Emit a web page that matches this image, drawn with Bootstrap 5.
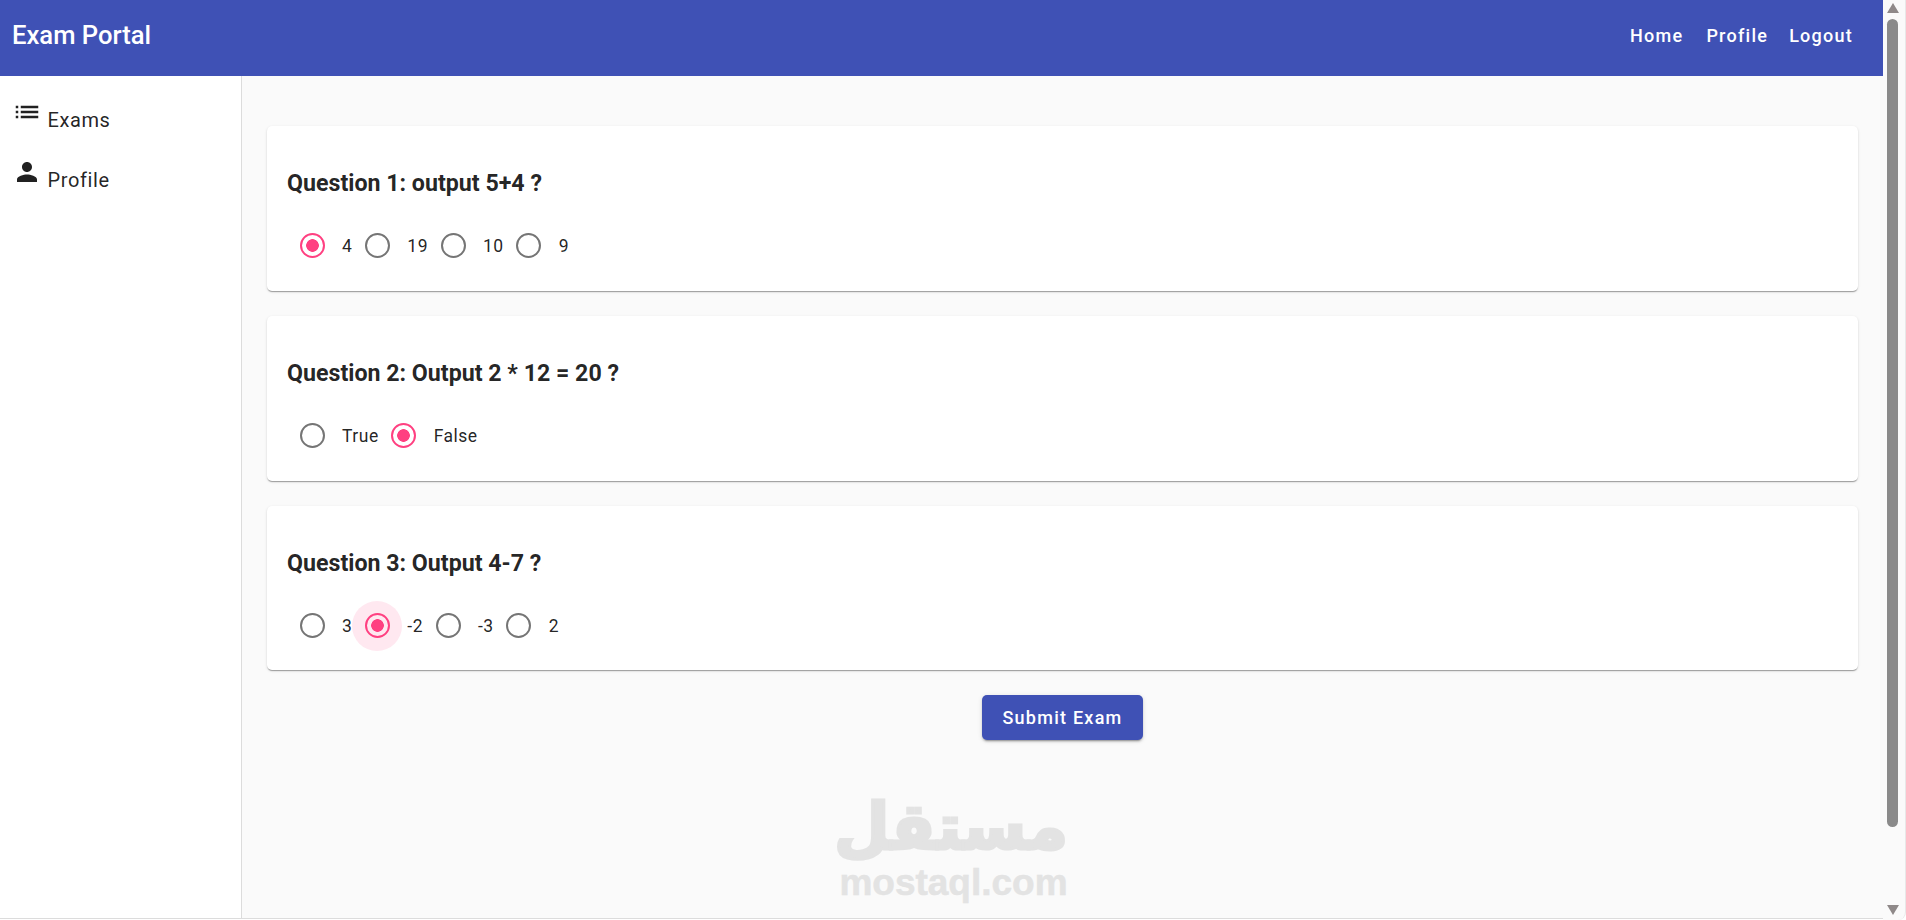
<!DOCTYPE html>
<html lang="en">
<head>
<meta charset="utf-8">
<title>Exam Portal</title>
<link href="https://cdn.jsdelivr.net/npm/bootstrap@5.3.0/dist/css/bootstrap.min.css" rel="stylesheet">
<style>
html,body{height:920px;overflow:hidden;}
body{font-family:Roboto,"Liberation Sans",sans-serif;background:#fff;color:rgba(0,0,0,.87);}
.shell{height:920px;}
.page-col{width:1883px;}
.top-bar{height:76px;background:#3f51b5;padding:0 30px 5px 12px;}
.top-bar .navbar-brand{font-size:25.6px;font-weight:500;color:#fff;padding:0 0 1px;margin:0;}
.top-links{gap:21px;}
.top-links .nav-link{color:#fff;font-size:18px;font-weight:500;letter-spacing:1.25px;padding:0;}
.top-links .nav-link.wide-gap{margin-right:2px;}
.body-row{height:843px;border-bottom:1px solid #dcdcdc;}
.side-menu{width:242px;background:#fff;border-right:1px solid #dcdcdc;padding-top:21px;}
.side-item{display:block;height:60px;padding-left:12px;font-size:20px;letter-spacing:.6px;color:rgba(0,0,0,.87);text-decoration:none;line-height:30px;}
.side-item svg{width:30px;height:30px;fill:#212121;margin-right:5.5px;vertical-align:baseline;}
.content-area{background:#fafafa;padding:50px 25px 0;}
.quiz-card{border:0;border-radius:5px;background:#fff;padding:20px;margin-bottom:25px;height:164.8px;box-shadow:0 2px 1px -1px rgba(0,0,0,.2),0 1px 1px 0 rgba(0,0,0,.14),0 1px 3px 0 rgba(0,0,0,.12);}
.quiz-title{font-size:23.2px;font-weight:700;line-height:30px;margin:22.4px 0 22.6px;color:rgba(0,0,0,.87);}
.opt{height:50px;font-size:17.5px;letter-spacing:.5px;color:rgba(0,0,0,.87);}
.opt-box{width:50px;height:50px;border-radius:50%;flex:none;}
.opt-box.is-focus{background:rgba(255,64,129,.12);}
.opt-label{padding-left:5px;line-height:50px;}
.opt input.form-check-input{width:25px;height:25px;margin:0;float:none;border:2px solid #757575;background-color:transparent;background-image:none;box-shadow:none;}
.opt input.form-check-input:checked{border-color:#ff4081;background-color:transparent;background-image:radial-gradient(circle,#ff4081 6px,transparent 6.6px);}
.submit-btn{background:#3f51b5;border:0;color:#fff;height:45px;width:161px;padding:0;border-radius:5px;font-size:18px;font-weight:500;letter-spacing:1.25px;box-shadow:0 3px 1px -2px rgba(0,0,0,.2),0 2px 2px 0 rgba(0,0,0,.14),0 1px 5px 0 rgba(0,0,0,.12);}
.submit-btn:hover{background:#3f51b5;color:#fff;}
.mark-logo{position:absolute;left:839px;top:712px;width:229px;color:#e3e3e3;text-align:center;font-weight:700;line-height:1;pointer-events:none;}
.mark-ar{font-family:"DejaVu Sans",sans-serif;font-size:64px;line-height:78px;white-space:nowrap;-webkit-text-stroke:3px #e3e3e3;}
.mark-en{font-family:"Liberation Sans",sans-serif;font-size:37px;line-height:34px;white-space:nowrap;-webkit-text-stroke:.5px #e3e3e3;}
.fake-scroll{width:23px;background:#fafafa;border-right:1px solid #e8e8e8;border-bottom-right-radius:8px;padding:3px 3px 5px 4px;}
.scroll-arrow{width:12px;height:10px;fill:#8f8989;flex:none;}
.scroll-thumb{width:11px;height:808px;background:#8a8a8a;border-radius:6px;margin:6px 0 78px;}
</style>
</head>
<body>
<div class="shell d-flex">
  <div class="page-col d-flex flex-column">
    <nav class="navbar top-bar d-flex justify-content-between align-items-center flex-nowrap">
      <a class="navbar-brand" href="#">Exam Portal</a>
      <div class="nav top-links flex-nowrap">
        <a class="nav-link wide-gap" href="#">Home</a>
        <a class="nav-link" href="#">Profile</a>
        <a class="nav-link" href="#">Logout</a>
      </div>
    </nav>
    <div class="body-row d-flex position-relative">
      <aside class="side-menu flex-shrink-0">
        <a class="side-item" href="#"><svg viewBox="0 0 24 24" aria-hidden="true"><path d="M3 13h2v-2H3v2zm0 4h2v-2H3v2zm0-8h2V7H3v2zm4 4h14v-2H7v2zm0 4h14v-2H7v2zM7 7v2h14V7H7z"/></svg><span>Exams</span></a>
        <a class="side-item" href="#"><svg viewBox="0 0 24 24" aria-hidden="true"><path d="M12 12c2.21 0 4-1.79 4-4s-1.79-4-4-4-4 1.79-4 4 1.79 4 4 4zm0 2c-2.67 0-8 1.34-8 4v2h16v-2c0-2.66-5.33-4-8-4z"/></svg><span>Profile</span></a>
      </aside>
      <main class="content-area flex-grow-1">
        <div class="card quiz-card">
          <h3 class="quiz-title">Question 1: output 5+4 ?</h3>
          <div class="d-flex opt">
            <label class="d-flex"><span class="opt-box d-flex align-items-center justify-content-center"><input class="form-check-input" type="radio" name="q1" checked></span><span class="opt-label">4</span></label>
            <label class="d-flex"><span class="opt-box d-flex align-items-center justify-content-center"><input class="form-check-input" type="radio" name="q1"></span><span class="opt-label">19</span></label>
            <label class="d-flex"><span class="opt-box d-flex align-items-center justify-content-center"><input class="form-check-input" type="radio" name="q1"></span><span class="opt-label">10</span></label>
            <label class="d-flex"><span class="opt-box d-flex align-items-center justify-content-center"><input class="form-check-input" type="radio" name="q1"></span><span class="opt-label">9</span></label>
          </div>
        </div>
        <div class="card quiz-card">
          <h3 class="quiz-title">Question 2: Output 2 * 12 = 20 ?</h3>
          <div class="d-flex opt">
            <label class="d-flex"><span class="opt-box d-flex align-items-center justify-content-center"><input class="form-check-input" type="radio" name="q2"></span><span class="opt-label">True</span></label>
            <label class="d-flex"><span class="opt-box d-flex align-items-center justify-content-center"><input class="form-check-input" type="radio" name="q2" checked></span><span class="opt-label">False</span></label>
          </div>
        </div>
        <div class="card quiz-card">
          <h3 class="quiz-title">Question 3: Output 4-7 ?</h3>
          <div class="d-flex opt">
            <label class="d-flex"><span class="opt-box d-flex align-items-center justify-content-center"><input class="form-check-input" type="radio" name="q3"></span><span class="opt-label">3</span></label>
            <label class="d-flex"><span class="opt-box is-focus d-flex align-items-center justify-content-center"><input class="form-check-input" type="radio" name="q3" checked></span><span class="opt-label">-2</span></label>
            <label class="d-flex"><span class="opt-box d-flex align-items-center justify-content-center"><input class="form-check-input" type="radio" name="q3"></span><span class="opt-label">-3</span></label>
            <label class="d-flex"><span class="opt-box d-flex align-items-center justify-content-center"><input class="form-check-input" type="radio" name="q3"></span><span class="opt-label">2</span></label>
          </div>
        </div>
        <div class="text-center">
          <button class="btn submit-btn" type="button">Submit Exam</button>
        </div>
        <div class="mark-logo">
          <div class="mark-ar" dir="rtl">مستقل</div>
          <div class="mark-en">mostaql.com</div>
        </div>
      </main>
    </div>
  </div>
  <div class="fake-scroll d-flex flex-column align-items-start flex-shrink-0">
    <svg class="scroll-arrow" viewBox="0 0 12 10" aria-hidden="true"><path d="M6 0l6 10H0z"/></svg>
    <div class="scroll-thumb"></div>
    <svg class="scroll-arrow" viewBox="0 0 12 10" aria-hidden="true"><path d="M0 0h12L6 10z"/></svg>
  </div>
</div>
<script src="https://cdn.jsdelivr.net/npm/bootstrap@5.3.0/dist/js/bootstrap.bundle.min.js"></script>
</body>
</html>
